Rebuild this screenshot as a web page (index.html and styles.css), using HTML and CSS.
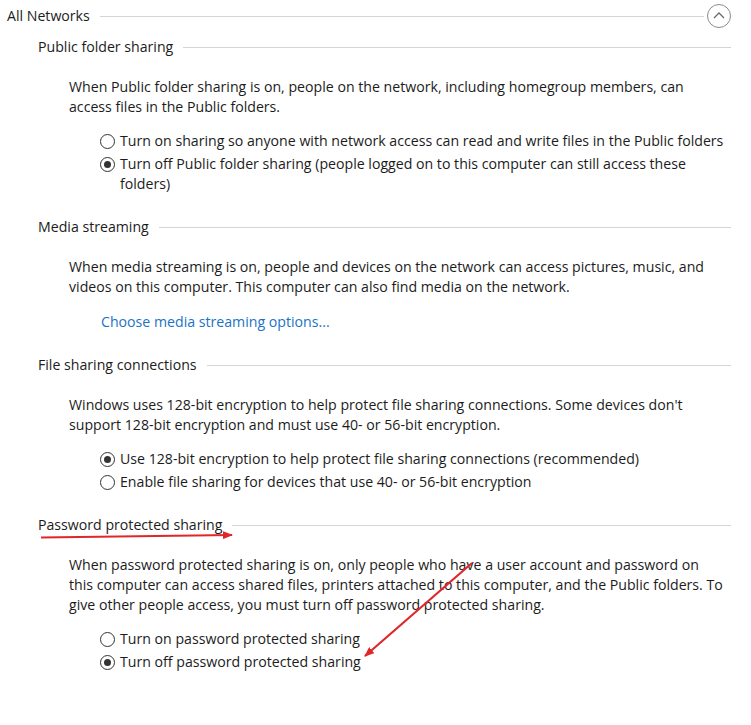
FILE: index.html
```html
<!DOCTYPE html>
<html lang="en">
<head>
<meta charset="utf-8">
<title>All Networks</title>
<link rel="stylesheet" href="styles.css">
</head>
<body>
<div class="page">
  <div class="top-head">
    <span class="top-title">All Networks</span>
    <span class="rule"></span>
    <span class="chev">
      <svg width="24" height="24" viewBox="0 0 24 24"><circle cx="12" cy="12" r="11.5" fill="none" stroke="#8a8a8a" stroke-width="1"/><path d="M7 14 L12 9 L17 14" fill="none" stroke="#6a6a6a" stroke-width="1.3"/></svg>
    </span>
  </div>

  <section class="sec sec-first">
    <div class="sec-head"><span>Public folder sharing</span><span class="rule"></span></div>
    <p class="para">When Public folder sharing is on, people on the network, including homegroup members, can access files in the Public folders.</p>
    <div class="radios">
      <div class="radio"><span class="dot"></span><span>Turn on sharing so anyone with network access can read and write files in the Public folders</span></div>
      <div class="radio"><span class="dot on"></span><span>Turn off Public folder sharing (people logged on to this computer can still access these folders)</span></div>
    </div>
  </section>

  <section class="sec">
    <div class="sec-head"><span>Media streaming</span><span class="rule"></span></div>
    <p class="para">When media streaming is on, people and devices on the network can access pictures, music, and videos on this computer. This computer can also find media on the network.</p>
    <a class="link" href="#">Choose media streaming options...</a>
  </section>

  <section class="sec">
    <div class="sec-head"><span>File sharing connections</span><span class="rule"></span></div>
    <p class="para">Windows uses 128-bit encryption to help protect file sharing connections. Some devices don't support 128-bit encryption and must use 40- or 56-bit encryption.</p>
    <div class="radios">
      <div class="radio"><span class="dot on"></span><span>Use 128-bit encryption to help protect file sharing connections (recommended)</span></div>
      <div class="radio"><span class="dot"></span><span>Enable file sharing for devices that use 40- or 56-bit encryption</span></div>
    </div>
  </section>

  <section class="sec">
    <div class="sec-head"><span>Password protected sharing</span><span class="rule"></span></div>
    <p class="para">When password protected sharing is on, only people who have a user account and password on this computer can access shared files, printers attached to this computer, and the Public folders. To give other people access, you must turn off password protected sharing.</p>
    <div class="radios">
      <div class="radio"><span class="dot"></span><span>Turn on password protected sharing</span></div>
      <div class="radio"><span class="dot on"></span><span>Turn off password protected sharing</span></div>
    </div>
  </section>

  <svg class="arrows" width="751" height="725" viewBox="0 0 751 725">
    <defs>
      <marker id="ah" markerWidth="10" markerHeight="8" refX="9" refY="4" orient="auto" markerUnits="userSpaceOnUse">
        <path d="M0 0 L10 4 L0 8 Z" fill="#e0262b"/>
      </marker>
    </defs>
    <line x1="41" y1="537.5" x2="232" y2="535" stroke="#e0262b" stroke-width="2.2" marker-end="url(#ah)"/>
    <line x1="472" y1="563" x2="365" y2="656" stroke="#e0262b" stroke-width="2.2" marker-end="url(#ah)"/>
  </svg>
</div>
</body>
</html>
```
FILE: styles.css
```css
html, body {
  margin: 0;
  padding: 0;
  background: #ffffff;
}
body {
  font-family: "Open Sans", "Noto Sans", "Liberation Sans", sans-serif;
  font-size: 14.15px;
  line-height: 20px;
  color: #1c1c1c;
}
.page {
  position: relative;
  width: 751px;
  height: 725px;
  overflow: hidden;
}
.top-head {
  display: flex;
  align-items: center;
  height: 20px;
  margin-top: 6px;
  padding-left: 7px;
}
.top-title {
  white-space: nowrap;
}
.rule {
  flex: 1;
  height: 0;
  border-top: 1px solid #d4d4d4;
  margin-left: 10px;
}
.chev {
  display: flex;
  width: 24px;
  height: 24px;
  margin-left: 3px;
  margin-right: 20px;
}
.sec {
  padding-left: 38px;
  padding-right: 20px;
  margin-top: 23px;
}
.sec-first {
  margin-top: 11px;
}
.sec-head {
  display: flex;
  align-items: center;
  height: 20px;
  white-space: nowrap;
}
.para {
  margin: 20px 0 0 31px;
  padding-right: 6px;
}
.radios {
  margin: 14px 0 0 62px;
  display: flex;
  flex-direction: column;
  gap: 3px;
}
.radio {
  display: flex;
  align-items: flex-start;
}
.dot {
  flex: none;
  width: 13px;
  height: 13px;
  border: 1px solid #333;
  border-radius: 50%;
  margin-top: 3px;
  margin-right: 5px;
  position: relative;
  box-sizing: content-box;
}
.dot.on::after {
  content: "";
  position: absolute;
  left: 3px;
  top: 3px;
  width: 7px;
  height: 7px;
  border-radius: 50%;
  background: #333;
}
.link {
  display: block;
  margin: 15px 0 0 63px;
  color: #1a73c7;
  text-decoration: none;
}
.arrows {
  position: absolute;
  left: 0;
  top: 0;
  pointer-events: none;
}
```
